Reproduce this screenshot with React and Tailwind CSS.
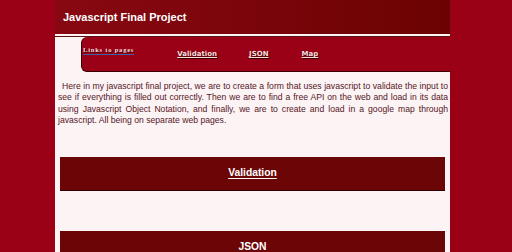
export default function App() {
  return (
    <div className="w-[512px] h-[252px] overflow-hidden bg-[#9a0016]">
      <div className="ml-[55px] w-[395px] h-[252px] bg-[#fcf4f4]">
        <div className="h-[34px] bg-gradient-to-r from-[#880812] to-[#6c0303] flex items-center pl-[8px] pt-[1px]">
          <h1 className="text-white font-bold text-[11px] leading-none [font-family:'Liberation_Sans',Arial,sans-serif]">
            Javascript Final Project
          </h1>
        </div>
        <div className="h-[3px] border-b border-[#5a1010]"></div>
        <nav className="ml-[26px] w-[369px] h-[35px] bg-[#9a0016] border-l border-b border-[#3a0000] rounded-bl-[6px] rounded-tl-[6px] flex items-start">
          <span className="ml-[1px] mt-[10px] inline-block text-[6.6px] font-bold tracking-[0.75px] leading-[6px] text-[#f4dada] border-b-[1.5px] border-[#3a62a8] pb-[1px] [font-family:'Liberation_Serif','Times_New_Roman',serif] [text-shadow:1px_1px_0_#400000]">
            Links to pages
          </span>
          <a className="ml-[43px] mt-[13px] text-[7px] font-bold leading-[8px] text-[#f6dede] underline underline-offset-[1px] [font-family:'DejaVu_Sans',Verdana,sans-serif] [text-shadow:1px_1px_1px_#3a0000]">
            Validation
          </a>
          <a className="ml-[32px] mt-[13px] text-[7px] font-bold leading-[8px] text-[#f6dede] underline underline-offset-[1px] [font-family:'DejaVu_Sans',Verdana,sans-serif] [text-shadow:1px_1px_1px_#3a0000]">
            JSON
          </a>
          <a className="ml-[33px] mt-[13px] text-[7px] font-bold leading-[8px] text-[#f6dede] underline underline-offset-[1px] [font-family:'DejaVu_Sans',Verdana,sans-serif] [text-shadow:1px_1px_1px_#3a0000]">
            Map
          </a>
        </nav>
        <p className="mt-[9px] pl-[3px] pr-[2px] text-[8.65px] leading-[11.4px] text-justify indent-[4px] text-[#571526] [font-family:'Liberation_Sans',Arial,sans-serif]">
          Here in my javascript final project, we are to create a form that uses javascript to validate the input to see if everything is filled out correctly. Then we are to find a free API on the web and load in its data using Javascript Object Notation, and finally, we are to create and load in a google map through javascript. All being on separate web pages.
        </p>
        <div className="mx-[5px] mt-[30px] h-[34px] bg-[#6c0505] border-b-[1.5px] border-[#2a0000] flex items-center justify-center">
          <a className="text-white font-bold text-[10.3px] underline underline-offset-[1.5px] [font-family:'Liberation_Sans',Arial,sans-serif]">
            Validation
          </a>
        </div>
        <div className="mx-[5px] mt-[40px] h-[34px] bg-[#6c0505] border-b-[1.5px] border-[#2a0000] flex items-center justify-center">
          <a className="text-white font-bold text-[10.3px] underline underline-offset-[1.5px] [font-family:'Liberation_Sans',Arial,sans-serif]">
            JSON
          </a>
        </div>
      </div>
    </div>
  );
}
